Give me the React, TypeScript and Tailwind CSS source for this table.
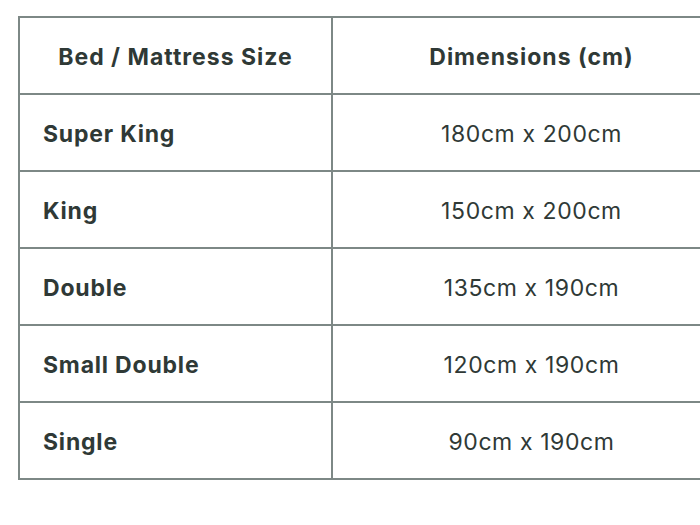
const rows = [
  ["Super King", "180cm x 200cm"],
  ["King", "150cm x 200cm"],
  ["Double", "135cm x 190cm"],
  ["Small Double", "120cm x 190cm"],
  ["Single", "90cm x 190cm"],
]

export default function App() {
  return (
    <div className="w-[700px] h-[525px] overflow-hidden bg-white pt-[16px] pl-[18px] font-['Inter',sans-serif] text-[#2f3936]">
      <table className="w-[712px] border-collapse table-fixed">
        <colgroup>
          <col className="w-[313px]" />
          <col className="w-[399px]" />
        </colgroup>
        <thead>
          <tr className="h-[77px]">
            <th className="border-2 border-[#7d8886] pt-[3px] text-center text-[23px] font-bold tracking-[1px]">Bed / Mattress Size</th>
            <th className="border-2 border-[#7d8886] pt-[3px] text-center text-[23px] font-bold tracking-[1px]">Dimensions (cm)</th>
          </tr>
        </thead>
        <tbody>
          {rows.map((r) => (
            <tr key={r[0]} className="h-[77px]">
              <td className="border-2 border-[#7d8886] pt-[3px] pl-[23px] text-left text-[23px] font-bold tracking-[0.8px]">{r[0]}</td>
              <td className="border-2 border-[#7d8886] pt-[3px] text-center text-[23px] font-normal tracking-[0.6px]">{r[1]}</td>
            </tr>
          ))}
        </tbody>
      </table>
    </div>
  )
}
